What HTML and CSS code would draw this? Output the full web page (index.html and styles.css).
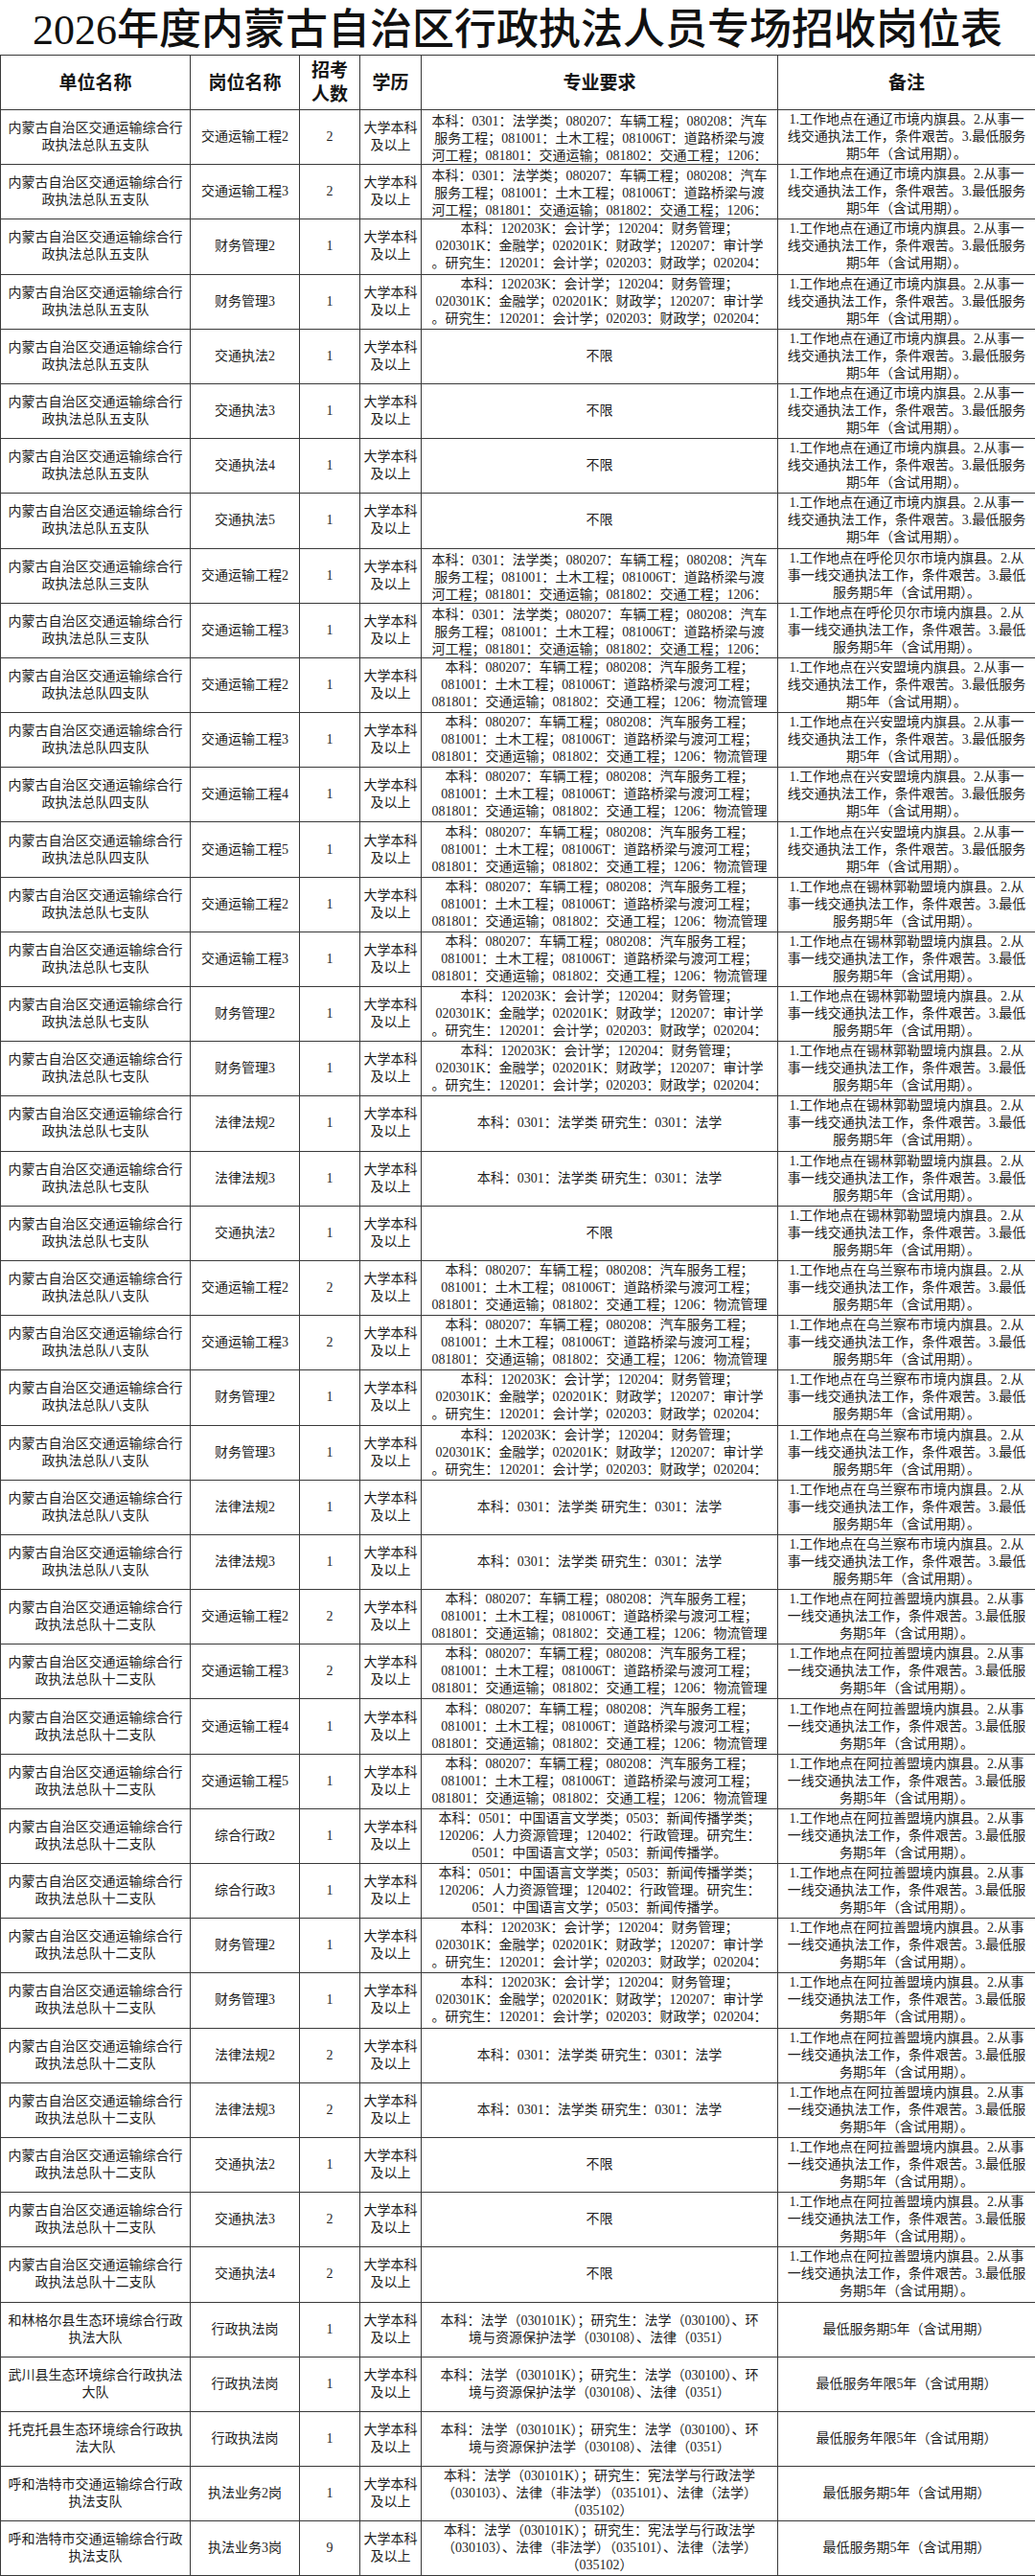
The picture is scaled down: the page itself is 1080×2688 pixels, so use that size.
FILE: index.html
```html
<!DOCTYPE html>
<html lang="zh-CN">
<head>
<meta charset="utf-8">
<title>2026年度内蒙古自治区行政执法人员专场招收岗位表</title>
<link rel="stylesheet" href="styles.css">
</head>
<body>
<h1 class="title">2026年度内蒙古自治区行政执法人员专场招收岗位表</h1>
<div class="sheet" role="table">
<div class="row head" role="row"><div class="cell" role="columnheader">单位名称</div><div class="cell" role="columnheader">岗位名称</div><div class="cell" role="columnheader"><span>招考</span><span>人数</span></div><div class="cell" role="columnheader">学历</div><div class="cell" role="columnheader">专业要求</div><div class="cell" role="columnheader">备注</div></div>
<!-- 五支队 -->
<div class="row" role="row"><div class="cell"><span>内蒙古自治区交通运输综合行</span><span>政执法总队五支队</span></div><div class="cell">交通运输工程2</div><div class="cell">2</div><div class="cell"><span>大学本科</span><span>及以上</span></div><div class="cell top"><span>本科：0301：法学类；080207：车辆工程；080208：汽车</span><span>服务工程；081001：土木工程；081006T：道路桥梁与渡</span><span>河工程；081801：交通运输；081802：交通工程；1206：</span></div><div class="cell"><span>1.工作地点在通辽市境内旗县。2.从事一</span><span>线交通执法工作，条件艰苦。3.最低服务</span><span>期5年（含试用期）。</span></div></div>
<div class="row" role="row"><div class="cell"><span>内蒙古自治区交通运输综合行</span><span>政执法总队五支队</span></div><div class="cell">交通运输工程3</div><div class="cell">2</div><div class="cell"><span>大学本科</span><span>及以上</span></div><div class="cell top"><span>本科：0301：法学类；080207：车辆工程；080208：汽车</span><span>服务工程；081001：土木工程；081006T：道路桥梁与渡</span><span>河工程；081801：交通运输；081802：交通工程；1206：</span></div><div class="cell"><span>1.工作地点在通辽市境内旗县。2.从事一</span><span>线交通执法工作，条件艰苦。3.最低服务</span><span>期5年（含试用期）。</span></div></div>
<div class="row" role="row"><div class="cell"><span>内蒙古自治区交通运输综合行</span><span>政执法总队五支队</span></div><div class="cell">财务管理2</div><div class="cell">1</div><div class="cell"><span>大学本科</span><span>及以上</span></div><div class="cell"><span>本科：120203K：会计学；120204：财务管理；</span><span>020301K：金融学；020201K：财政学；120207：审计学</span><span>。研究生：120201：会计学；020203：财政学；020204：</span></div><div class="cell"><span>1.工作地点在通辽市境内旗县。2.从事一</span><span>线交通执法工作，条件艰苦。3.最低服务</span><span>期5年（含试用期）。</span></div></div>
<div class="row" role="row"><div class="cell"><span>内蒙古自治区交通运输综合行</span><span>政执法总队五支队</span></div><div class="cell">财务管理3</div><div class="cell">1</div><div class="cell"><span>大学本科</span><span>及以上</span></div><div class="cell"><span>本科：120203K：会计学；120204：财务管理；</span><span>020301K：金融学；020201K：财政学；120207：审计学</span><span>。研究生：120201：会计学；020203：财政学；020204：</span></div><div class="cell"><span>1.工作地点在通辽市境内旗县。2.从事一</span><span>线交通执法工作，条件艰苦。3.最低服务</span><span>期5年（含试用期）。</span></div></div>
<div class="row" role="row"><div class="cell"><span>内蒙古自治区交通运输综合行</span><span>政执法总队五支队</span></div><div class="cell">交通执法2</div><div class="cell">1</div><div class="cell"><span>大学本科</span><span>及以上</span></div><div class="cell">不限</div><div class="cell"><span>1.工作地点在通辽市境内旗县。2.从事一</span><span>线交通执法工作，条件艰苦。3.最低服务</span><span>期5年（含试用期）。</span></div></div>
<div class="row" role="row"><div class="cell"><span>内蒙古自治区交通运输综合行</span><span>政执法总队五支队</span></div><div class="cell">交通执法3</div><div class="cell">1</div><div class="cell"><span>大学本科</span><span>及以上</span></div><div class="cell">不限</div><div class="cell"><span>1.工作地点在通辽市境内旗县。2.从事一</span><span>线交通执法工作，条件艰苦。3.最低服务</span><span>期5年（含试用期）。</span></div></div>
<div class="row" role="row"><div class="cell"><span>内蒙古自治区交通运输综合行</span><span>政执法总队五支队</span></div><div class="cell">交通执法4</div><div class="cell">1</div><div class="cell"><span>大学本科</span><span>及以上</span></div><div class="cell">不限</div><div class="cell"><span>1.工作地点在通辽市境内旗县。2.从事一</span><span>线交通执法工作，条件艰苦。3.最低服务</span><span>期5年（含试用期）。</span></div></div>
<div class="row" role="row"><div class="cell"><span>内蒙古自治区交通运输综合行</span><span>政执法总队五支队</span></div><div class="cell">交通执法5</div><div class="cell">1</div><div class="cell"><span>大学本科</span><span>及以上</span></div><div class="cell">不限</div><div class="cell"><span>1.工作地点在通辽市境内旗县。2.从事一</span><span>线交通执法工作，条件艰苦。3.最低服务</span><span>期5年（含试用期）。</span></div></div>
<!-- 三支队 -->
<div class="row" role="row"><div class="cell"><span>内蒙古自治区交通运输综合行</span><span>政执法总队三支队</span></div><div class="cell">交通运输工程2</div><div class="cell">1</div><div class="cell"><span>大学本科</span><span>及以上</span></div><div class="cell top"><span>本科：0301：法学类；080207：车辆工程；080208：汽车</span><span>服务工程；081001：土木工程；081006T：道路桥梁与渡</span><span>河工程；081801：交通运输；081802：交通工程；1206：</span></div><div class="cell"><span>1.工作地点在呼伦贝尔市境内旗县。2.从</span><span>事一线交通执法工作，条件艰苦。3.最低</span><span>服务期5年（含试用期）。</span></div></div>
<div class="row" role="row"><div class="cell"><span>内蒙古自治区交通运输综合行</span><span>政执法总队三支队</span></div><div class="cell">交通运输工程3</div><div class="cell">1</div><div class="cell"><span>大学本科</span><span>及以上</span></div><div class="cell top"><span>本科：0301：法学类；080207：车辆工程；080208：汽车</span><span>服务工程；081001：土木工程；081006T：道路桥梁与渡</span><span>河工程；081801：交通运输；081802：交通工程；1206：</span></div><div class="cell"><span>1.工作地点在呼伦贝尔市境内旗县。2.从</span><span>事一线交通执法工作，条件艰苦。3.最低</span><span>服务期5年（含试用期）。</span></div></div>
<!-- 四支队 -->
<div class="row" role="row"><div class="cell"><span>内蒙古自治区交通运输综合行</span><span>政执法总队四支队</span></div><div class="cell">交通运输工程2</div><div class="cell">1</div><div class="cell"><span>大学本科</span><span>及以上</span></div><div class="cell"><span>本科：080207：车辆工程；080208：汽车服务工程；</span><span>081001：土木工程；081006T：道路桥梁与渡河工程；</span><span>081801：交通运输；081802：交通工程；1206：物流管理</span></div><div class="cell"><span>1.工作地点在兴安盟境内旗县。2.从事一</span><span>线交通执法工作，条件艰苦。3.最低服务</span><span>期5年（含试用期）。</span></div></div>
<div class="row" role="row"><div class="cell"><span>内蒙古自治区交通运输综合行</span><span>政执法总队四支队</span></div><div class="cell">交通运输工程3</div><div class="cell">1</div><div class="cell"><span>大学本科</span><span>及以上</span></div><div class="cell"><span>本科：080207：车辆工程；080208：汽车服务工程；</span><span>081001：土木工程；081006T：道路桥梁与渡河工程；</span><span>081801：交通运输；081802：交通工程；1206：物流管理</span></div><div class="cell"><span>1.工作地点在兴安盟境内旗县。2.从事一</span><span>线交通执法工作，条件艰苦。3.最低服务</span><span>期5年（含试用期）。</span></div></div>
<div class="row" role="row"><div class="cell"><span>内蒙古自治区交通运输综合行</span><span>政执法总队四支队</span></div><div class="cell">交通运输工程4</div><div class="cell">1</div><div class="cell"><span>大学本科</span><span>及以上</span></div><div class="cell"><span>本科：080207：车辆工程；080208：汽车服务工程；</span><span>081001：土木工程；081006T：道路桥梁与渡河工程；</span><span>081801：交通运输；081802：交通工程；1206：物流管理</span></div><div class="cell"><span>1.工作地点在兴安盟境内旗县。2.从事一</span><span>线交通执法工作，条件艰苦。3.最低服务</span><span>期5年（含试用期）。</span></div></div>
<div class="row" role="row"><div class="cell"><span>内蒙古自治区交通运输综合行</span><span>政执法总队四支队</span></div><div class="cell">交通运输工程5</div><div class="cell">1</div><div class="cell"><span>大学本科</span><span>及以上</span></div><div class="cell"><span>本科：080207：车辆工程；080208：汽车服务工程；</span><span>081001：土木工程；081006T：道路桥梁与渡河工程；</span><span>081801：交通运输；081802：交通工程；1206：物流管理</span></div><div class="cell"><span>1.工作地点在兴安盟境内旗县。2.从事一</span><span>线交通执法工作，条件艰苦。3.最低服务</span><span>期5年（含试用期）。</span></div></div>
<!-- 七支队 -->
<div class="row" role="row"><div class="cell"><span>内蒙古自治区交通运输综合行</span><span>政执法总队七支队</span></div><div class="cell">交通运输工程2</div><div class="cell">1</div><div class="cell"><span>大学本科</span><span>及以上</span></div><div class="cell"><span>本科：080207：车辆工程；080208：汽车服务工程；</span><span>081001：土木工程；081006T：道路桥梁与渡河工程；</span><span>081801：交通运输；081802：交通工程；1206：物流管理</span></div><div class="cell"><span>1.工作地点在锡林郭勒盟境内旗县。2.从</span><span>事一线交通执法工作，条件艰苦。3.最低</span><span>服务期5年（含试用期）。</span></div></div>
<div class="row" role="row"><div class="cell"><span>内蒙古自治区交通运输综合行</span><span>政执法总队七支队</span></div><div class="cell">交通运输工程3</div><div class="cell">1</div><div class="cell"><span>大学本科</span><span>及以上</span></div><div class="cell"><span>本科：080207：车辆工程；080208：汽车服务工程；</span><span>081001：土木工程；081006T：道路桥梁与渡河工程；</span><span>081801：交通运输；081802：交通工程；1206：物流管理</span></div><div class="cell"><span>1.工作地点在锡林郭勒盟境内旗县。2.从</span><span>事一线交通执法工作，条件艰苦。3.最低</span><span>服务期5年（含试用期）。</span></div></div>
<div class="row" role="row"><div class="cell"><span>内蒙古自治区交通运输综合行</span><span>政执法总队七支队</span></div><div class="cell">财务管理2</div><div class="cell">1</div><div class="cell"><span>大学本科</span><span>及以上</span></div><div class="cell"><span>本科：120203K：会计学；120204：财务管理；</span><span>020301K：金融学；020201K：财政学；120207：审计学</span><span>。研究生：120201：会计学；020203：财政学；020204：</span></div><div class="cell"><span>1.工作地点在锡林郭勒盟境内旗县。2.从</span><span>事一线交通执法工作，条件艰苦。3.最低</span><span>服务期5年（含试用期）。</span></div></div>
<div class="row" role="row"><div class="cell"><span>内蒙古自治区交通运输综合行</span><span>政执法总队七支队</span></div><div class="cell">财务管理3</div><div class="cell">1</div><div class="cell"><span>大学本科</span><span>及以上</span></div><div class="cell"><span>本科：120203K：会计学；120204：财务管理；</span><span>020301K：金融学；020201K：财政学；120207：审计学</span><span>。研究生：120201：会计学；020203：财政学；020204：</span></div><div class="cell"><span>1.工作地点在锡林郭勒盟境内旗县。2.从</span><span>事一线交通执法工作，条件艰苦。3.最低</span><span>服务期5年（含试用期）。</span></div></div>
<div class="row" role="row"><div class="cell"><span>内蒙古自治区交通运输综合行</span><span>政执法总队七支队</span></div><div class="cell">法律法规2</div><div class="cell">1</div><div class="cell"><span>大学本科</span><span>及以上</span></div><div class="cell">本科：0301：法学类 研究生：0301：法学</div><div class="cell"><span>1.工作地点在锡林郭勒盟境内旗县。2.从</span><span>事一线交通执法工作，条件艰苦。3.最低</span><span>服务期5年（含试用期）。</span></div></div>
<div class="row" role="row"><div class="cell"><span>内蒙古自治区交通运输综合行</span><span>政执法总队七支队</span></div><div class="cell">法律法规3</div><div class="cell">1</div><div class="cell"><span>大学本科</span><span>及以上</span></div><div class="cell">本科：0301：法学类 研究生：0301：法学</div><div class="cell"><span>1.工作地点在锡林郭勒盟境内旗县。2.从</span><span>事一线交通执法工作，条件艰苦。3.最低</span><span>服务期5年（含试用期）。</span></div></div>
<div class="row" role="row"><div class="cell"><span>内蒙古自治区交通运输综合行</span><span>政执法总队七支队</span></div><div class="cell">交通执法2</div><div class="cell">1</div><div class="cell"><span>大学本科</span><span>及以上</span></div><div class="cell">不限</div><div class="cell"><span>1.工作地点在锡林郭勒盟境内旗县。2.从</span><span>事一线交通执法工作，条件艰苦。3.最低</span><span>服务期5年（含试用期）。</span></div></div>
<!-- 八支队 -->
<div class="row" role="row"><div class="cell"><span>内蒙古自治区交通运输综合行</span><span>政执法总队八支队</span></div><div class="cell">交通运输工程2</div><div class="cell">2</div><div class="cell"><span>大学本科</span><span>及以上</span></div><div class="cell"><span>本科：080207：车辆工程；080208：汽车服务工程；</span><span>081001：土木工程；081006T：道路桥梁与渡河工程；</span><span>081801：交通运输；081802：交通工程；1206：物流管理</span></div><div class="cell"><span>1.工作地点在乌兰察布市境内旗县。2.从</span><span>事一线交通执法工作，条件艰苦。3.最低</span><span>服务期5年（含试用期）。</span></div></div>
<div class="row" role="row"><div class="cell"><span>内蒙古自治区交通运输综合行</span><span>政执法总队八支队</span></div><div class="cell">交通运输工程3</div><div class="cell">2</div><div class="cell"><span>大学本科</span><span>及以上</span></div><div class="cell"><span>本科：080207：车辆工程；080208：汽车服务工程；</span><span>081001：土木工程；081006T：道路桥梁与渡河工程；</span><span>081801：交通运输；081802：交通工程；1206：物流管理</span></div><div class="cell"><span>1.工作地点在乌兰察布市境内旗县。2.从</span><span>事一线交通执法工作，条件艰苦。3.最低</span><span>服务期5年（含试用期）。</span></div></div>
<div class="row" role="row"><div class="cell"><span>内蒙古自治区交通运输综合行</span><span>政执法总队八支队</span></div><div class="cell">财务管理2</div><div class="cell">1</div><div class="cell"><span>大学本科</span><span>及以上</span></div><div class="cell"><span>本科：120203K：会计学；120204：财务管理；</span><span>020301K：金融学；020201K：财政学；120207：审计学</span><span>。研究生：120201：会计学；020203：财政学；020204：</span></div><div class="cell"><span>1.工作地点在乌兰察布市境内旗县。2.从</span><span>事一线交通执法工作，条件艰苦。3.最低</span><span>服务期5年（含试用期）。</span></div></div>
<div class="row" role="row"><div class="cell"><span>内蒙古自治区交通运输综合行</span><span>政执法总队八支队</span></div><div class="cell">财务管理3</div><div class="cell">1</div><div class="cell"><span>大学本科</span><span>及以上</span></div><div class="cell"><span>本科：120203K：会计学；120204：财务管理；</span><span>020301K：金融学；020201K：财政学；120207：审计学</span><span>。研究生：120201：会计学；020203：财政学；020204：</span></div><div class="cell"><span>1.工作地点在乌兰察布市境内旗县。2.从</span><span>事一线交通执法工作，条件艰苦。3.最低</span><span>服务期5年（含试用期）。</span></div></div>
<div class="row" role="row"><div class="cell"><span>内蒙古自治区交通运输综合行</span><span>政执法总队八支队</span></div><div class="cell">法律法规2</div><div class="cell">1</div><div class="cell"><span>大学本科</span><span>及以上</span></div><div class="cell">本科：0301：法学类 研究生：0301：法学</div><div class="cell"><span>1.工作地点在乌兰察布市境内旗县。2.从</span><span>事一线交通执法工作，条件艰苦。3.最低</span><span>服务期5年（含试用期）。</span></div></div>
<div class="row" role="row"><div class="cell"><span>内蒙古自治区交通运输综合行</span><span>政执法总队八支队</span></div><div class="cell">法律法规3</div><div class="cell">1</div><div class="cell"><span>大学本科</span><span>及以上</span></div><div class="cell">本科：0301：法学类 研究生：0301：法学</div><div class="cell"><span>1.工作地点在乌兰察布市境内旗县。2.从</span><span>事一线交通执法工作，条件艰苦。3.最低</span><span>服务期5年（含试用期）。</span></div></div>
<!-- 十二支队 -->
<div class="row" role="row"><div class="cell"><span>内蒙古自治区交通运输综合行</span><span>政执法总队十二支队</span></div><div class="cell">交通运输工程2</div><div class="cell">2</div><div class="cell"><span>大学本科</span><span>及以上</span></div><div class="cell"><span>本科：080207：车辆工程；080208：汽车服务工程；</span><span>081001：土木工程；081006T：道路桥梁与渡河工程；</span><span>081801：交通运输；081802：交通工程；1206：物流管理</span></div><div class="cell"><span>1.工作地点在阿拉善盟境内旗县。2.从事</span><span>一线交通执法工作，条件艰苦。3.最低服</span><span>务期5年（含试用期）。</span></div></div>
<div class="row" role="row"><div class="cell"><span>内蒙古自治区交通运输综合行</span><span>政执法总队十二支队</span></div><div class="cell">交通运输工程3</div><div class="cell">2</div><div class="cell"><span>大学本科</span><span>及以上</span></div><div class="cell"><span>本科：080207：车辆工程；080208：汽车服务工程；</span><span>081001：土木工程；081006T：道路桥梁与渡河工程；</span><span>081801：交通运输；081802：交通工程；1206：物流管理</span></div><div class="cell"><span>1.工作地点在阿拉善盟境内旗县。2.从事</span><span>一线交通执法工作，条件艰苦。3.最低服</span><span>务期5年（含试用期）。</span></div></div>
<div class="row" role="row"><div class="cell"><span>内蒙古自治区交通运输综合行</span><span>政执法总队十二支队</span></div><div class="cell">交通运输工程4</div><div class="cell">1</div><div class="cell"><span>大学本科</span><span>及以上</span></div><div class="cell"><span>本科：080207：车辆工程；080208：汽车服务工程；</span><span>081001：土木工程；081006T：道路桥梁与渡河工程；</span><span>081801：交通运输；081802：交通工程；1206：物流管理</span></div><div class="cell"><span>1.工作地点在阿拉善盟境内旗县。2.从事</span><span>一线交通执法工作，条件艰苦。3.最低服</span><span>务期5年（含试用期）。</span></div></div>
<div class="row" role="row"><div class="cell"><span>内蒙古自治区交通运输综合行</span><span>政执法总队十二支队</span></div><div class="cell">交通运输工程5</div><div class="cell">1</div><div class="cell"><span>大学本科</span><span>及以上</span></div><div class="cell"><span>本科：080207：车辆工程；080208：汽车服务工程；</span><span>081001：土木工程；081006T：道路桥梁与渡河工程；</span><span>081801：交通运输；081802：交通工程；1206：物流管理</span></div><div class="cell"><span>1.工作地点在阿拉善盟境内旗县。2.从事</span><span>一线交通执法工作，条件艰苦。3.最低服</span><span>务期5年（含试用期）。</span></div></div>
<div class="row" role="row"><div class="cell"><span>内蒙古自治区交通运输综合行</span><span>政执法总队十二支队</span></div><div class="cell">综合行政2</div><div class="cell">1</div><div class="cell"><span>大学本科</span><span>及以上</span></div><div class="cell"><span>本科：0501：中国语言文学类；0503：新闻传播学类；</span><span>120206：人力资源管理；120402：行政管理。研究生：</span><span>0501：中国语言文学；0503：新闻传播学。</span></div><div class="cell"><span>1.工作地点在阿拉善盟境内旗县。2.从事</span><span>一线交通执法工作，条件艰苦。3.最低服</span><span>务期5年（含试用期）。</span></div></div>
<div class="row" role="row"><div class="cell"><span>内蒙古自治区交通运输综合行</span><span>政执法总队十二支队</span></div><div class="cell">综合行政3</div><div class="cell">1</div><div class="cell"><span>大学本科</span><span>及以上</span></div><div class="cell"><span>本科：0501：中国语言文学类；0503：新闻传播学类；</span><span>120206：人力资源管理；120402：行政管理。研究生：</span><span>0501：中国语言文学；0503：新闻传播学。</span></div><div class="cell"><span>1.工作地点在阿拉善盟境内旗县。2.从事</span><span>一线交通执法工作，条件艰苦。3.最低服</span><span>务期5年（含试用期）。</span></div></div>
<div class="row" role="row"><div class="cell"><span>内蒙古自治区交通运输综合行</span><span>政执法总队十二支队</span></div><div class="cell">财务管理2</div><div class="cell">1</div><div class="cell"><span>大学本科</span><span>及以上</span></div><div class="cell"><span>本科：120203K：会计学；120204：财务管理；</span><span>020301K：金融学；020201K：财政学；120207：审计学</span><span>。研究生：120201：会计学；020203：财政学；020204：</span></div><div class="cell"><span>1.工作地点在阿拉善盟境内旗县。2.从事</span><span>一线交通执法工作，条件艰苦。3.最低服</span><span>务期5年（含试用期）。</span></div></div>
<div class="row" role="row"><div class="cell"><span>内蒙古自治区交通运输综合行</span><span>政执法总队十二支队</span></div><div class="cell">财务管理3</div><div class="cell">1</div><div class="cell"><span>大学本科</span><span>及以上</span></div><div class="cell"><span>本科：120203K：会计学；120204：财务管理；</span><span>020301K：金融学；020201K：财政学；120207：审计学</span><span>。研究生：120201：会计学；020203：财政学；020204：</span></div><div class="cell"><span>1.工作地点在阿拉善盟境内旗县。2.从事</span><span>一线交通执法工作，条件艰苦。3.最低服</span><span>务期5年（含试用期）。</span></div></div>
<div class="row" role="row"><div class="cell"><span>内蒙古自治区交通运输综合行</span><span>政执法总队十二支队</span></div><div class="cell">法律法规2</div><div class="cell">2</div><div class="cell"><span>大学本科</span><span>及以上</span></div><div class="cell">本科：0301：法学类 研究生：0301：法学</div><div class="cell"><span>1.工作地点在阿拉善盟境内旗县。2.从事</span><span>一线交通执法工作，条件艰苦。3.最低服</span><span>务期5年（含试用期）。</span></div></div>
<div class="row" role="row"><div class="cell"><span>内蒙古自治区交通运输综合行</span><span>政执法总队十二支队</span></div><div class="cell">法律法规3</div><div class="cell">2</div><div class="cell"><span>大学本科</span><span>及以上</span></div><div class="cell">本科：0301：法学类 研究生：0301：法学</div><div class="cell"><span>1.工作地点在阿拉善盟境内旗县。2.从事</span><span>一线交通执法工作，条件艰苦。3.最低服</span><span>务期5年（含试用期）。</span></div></div>
<div class="row" role="row"><div class="cell"><span>内蒙古自治区交通运输综合行</span><span>政执法总队十二支队</span></div><div class="cell">交通执法2</div><div class="cell">1</div><div class="cell"><span>大学本科</span><span>及以上</span></div><div class="cell">不限</div><div class="cell"><span>1.工作地点在阿拉善盟境内旗县。2.从事</span><span>一线交通执法工作，条件艰苦。3.最低服</span><span>务期5年（含试用期）。</span></div></div>
<div class="row" role="row"><div class="cell"><span>内蒙古自治区交通运输综合行</span><span>政执法总队十二支队</span></div><div class="cell">交通执法3</div><div class="cell">2</div><div class="cell"><span>大学本科</span><span>及以上</span></div><div class="cell">不限</div><div class="cell"><span>1.工作地点在阿拉善盟境内旗县。2.从事</span><span>一线交通执法工作，条件艰苦。3.最低服</span><span>务期5年（含试用期）。</span></div></div>
<div class="row" role="row"><div class="cell"><span>内蒙古自治区交通运输综合行</span><span>政执法总队十二支队</span></div><div class="cell">交通执法4</div><div class="cell">2</div><div class="cell"><span>大学本科</span><span>及以上</span></div><div class="cell">不限</div><div class="cell"><span>1.工作地点在阿拉善盟境内旗县。2.从事</span><span>一线交通执法工作，条件艰苦。3.最低服</span><span>务期5年（含试用期）。</span></div></div>
<!-- 其他单位 -->
<div class="row" role="row"><div class="cell"><span>和林格尔县生态环境综合行政</span><span>执法大队</span></div><div class="cell">行政执法岗</div><div class="cell">1</div><div class="cell"><span>大学本科</span><span>及以上</span></div><div class="cell"><span>本科：法学（030101K）；研究生：法学（030100）、环</span><span>境与资源保护法学（030108）、法律（0351）</span></div><div class="cell">最低服务期5年（含试用期）</div></div>
<div class="row" role="row"><div class="cell"><span>武川县生态环境综合行政执法</span><span>大队</span></div><div class="cell">行政执法岗</div><div class="cell">1</div><div class="cell"><span>大学本科</span><span>及以上</span></div><div class="cell"><span>本科：法学（030101K）；研究生：法学（030100）、环</span><span>境与资源保护法学（030108）、法律（0351）</span></div><div class="cell">最低服务年限5年（含试用期）</div></div>
<div class="row" role="row"><div class="cell"><span>托克托县生态环境综合行政执</span><span>法大队</span></div><div class="cell">行政执法岗</div><div class="cell">1</div><div class="cell"><span>大学本科</span><span>及以上</span></div><div class="cell"><span>本科：法学（030101K）；研究生：法学（030100）、环</span><span>境与资源保护法学（030108）、法律（0351）</span></div><div class="cell">最低服务年限5年（含试用期）</div></div>
<div class="row" role="row"><div class="cell"><span>呼和浩特市交通运输综合行政</span><span>执法支队</span></div><div class="cell">执法业务2岗</div><div class="cell">1</div><div class="cell"><span>大学本科</span><span>及以上</span></div><div class="cell"><span>本科：法学（030101K）；研究生：宪法学与行政法学</span><span>（030103）、法律（非法学）（035101）、法律（法学）</span><span>（035102）</span></div><div class="cell">最低服务期5年（含试用期）</div></div>
<div class="row" role="row"><div class="cell"><span>呼和浩特市交通运输综合行政</span><span>执法支队</span></div><div class="cell">执法业务3岗</div><div class="cell">9</div><div class="cell"><span>大学本科</span><span>及以上</span></div><div class="cell"><span>本科：法学（030101K）；研究生：宪法学与行政法学</span><span>（030103）、法律（非法学）（035101）、法律（法学）</span><span>（035102）</span></div><div class="cell">最低服务期5年（含试用期）</div></div>
</div>
</body>
</html>
```
FILE: styles.css
```css
html, body {
  margin: 0;
  padding: 0;
  background: #ffffff;
}

body {
  width: 1080px;
  color: #1e1e1e;
  font-family: "Liberation Serif", "Noto Sans CJK SC", serif;
}

.title {
  box-sizing: border-box;
  margin: 0;
  height: 57px;
  padding-top: 6px;
  line-height: 51px;
  font-size: 44px;
  font-weight: 500;
  text-align: center;
  white-space: nowrap;
  color: #111111;
}

.sheet {
  display: grid;
  grid-template-columns: 198px 114px 63px 64px 372px 269px;
  grid-template-rows: 57px;
  grid-auto-rows: 57.2px;
  width: 1080px;
  box-sizing: border-box;
  border-left: 1px solid #3a3a3a;
  border-top: 1px solid #3a3a3a;
}

.row {
  display: contents;
}

.cell {
  box-sizing: border-box;
  display: flex;
  flex-direction: column;
  justify-content: center;
  align-items: center;
  border-right: 1px solid #3a3a3a;
  border-bottom: 1px solid #3a3a3a;
  overflow: hidden;
  white-space: nowrap;
  text-align: center;
  font-size: 14px;
  line-height: 18px;
}

.cell span {
  display: block;
}

.head .cell {
  font-size: 19px;
  font-weight: 600;
  line-height: 25px;
  color: #151515;
}

.cell.top {
  justify-content: flex-start;
  padding-top: 3px;
}
```
